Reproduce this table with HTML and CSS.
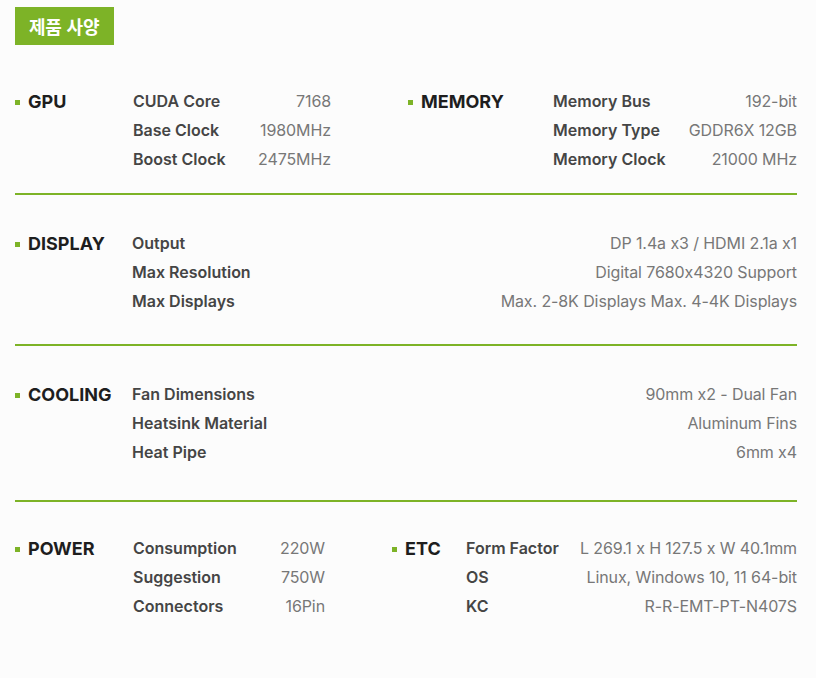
FILE: index.html
```html
<!DOCTYPE html>
<html lang="ko">
<head>
<meta charset="utf-8">
<title>제품 사양</title>
<link rel="stylesheet" href="styles.css">
</head>
<body>
<div class="page">
  <div class="badge">제품 사양</div>

  <section class="spec spec--first">
    <div class="group group--gpu">
      <h3 class="group-title">GPU</h3>
      <dl class="rows">
        <div class="row"><dt>CUDA Core</dt><dd>7168</dd></div>
        <div class="row"><dt>Base Clock</dt><dd>1980MHz</dd></div>
        <div class="row"><dt>Boost Clock</dt><dd>2475MHz</dd></div>
      </dl>
    </div>
    <div class="group group--memory">
      <h3 class="group-title">MEMORY</h3>
      <dl class="rows">
        <div class="row"><dt>Memory Bus</dt><dd>192-bit</dd></div>
        <div class="row"><dt>Memory Type</dt><dd>GDDR6X 12GB</dd></div>
        <div class="row"><dt>Memory Clock</dt><dd>21000 MHz</dd></div>
      </dl>
    </div>
  </section>

  <section class="spec spec--display">
    <div class="group group--wide">
      <h3 class="group-title">DISPLAY</h3>
      <dl class="rows">
        <div class="row"><dt>Output</dt><dd>DP 1.4a x3 / HDMI 2.1a x1</dd></div>
        <div class="row"><dt>Max Resolution</dt><dd>Digital 7680x4320 Support</dd></div>
        <div class="row"><dt>Max Displays</dt><dd>Max. 2-8K Displays Max. 4-4K Displays</dd></div>
      </dl>
    </div>
  </section>

  <section class="spec spec--cooling">
    <div class="group group--wide">
      <h3 class="group-title">COOLING</h3>
      <dl class="rows">
        <div class="row"><dt>Fan Dimensions</dt><dd>90mm x2 - Dual Fan</dd></div>
        <div class="row"><dt>Heatsink Material</dt><dd>Aluminum Fins</dd></div>
        <div class="row"><dt>Heat Pipe</dt><dd>6mm x4</dd></div>
      </dl>
    </div>
  </section>

  <section class="spec spec--last">
    <div class="group group--power">
      <h3 class="group-title">POWER</h3>
      <dl class="rows">
        <div class="row"><dt>Consumption</dt><dd>220W</dd></div>
        <div class="row"><dt>Suggestion</dt><dd>750W</dd></div>
        <div class="row"><dt>Connectors</dt><dd>16Pin</dd></div>
      </dl>
    </div>
    <div class="group group--etc">
      <h3 class="group-title">ETC</h3>
      <dl class="rows">
        <div class="row"><dt>Form Factor</dt><dd>L 269.1 x H 127.5 x W 40.1mm</dd></div>
        <div class="row"><dt>OS</dt><dd>Linux, Windows 10, 11 64-bit</dd></div>
        <div class="row"><dt>KC</dt><dd>R-R-EMT-PT-N407S</dd></div>
      </dl>
    </div>
  </section>
</div>
</body>
</html>
```

FILE: styles.css
```css
* { box-sizing: border-box; }

html, body {
  margin: 0;
  background: #fcfcfc;
}

body {
  font-family: Inter, "Noto Sans", "Noto Sans CJK KR", sans-serif;
  font-feature-settings: "calt" 0;
  color: #444;
}

.page {
  padding: 7px 19px 0 15px;
}

.badge {
  display: inline-block;
  height: 38px;
  line-height: 38px;
  padding: 0 15px 0 14px;
  background: #7db327;
  color: #fff;
  font-family: "Noto Sans CJK KR", sans-serif;
  font-weight: 700;
  font-size: 18px;
  letter-spacing: -0.2px;
}

.spec {
  display: flex;
  border-bottom: 2px solid #7db327;
}

.spec--first { padding: 42px 0 19px; }
.spec--display { padding: 34px 0 28px; }
.spec--cooling { padding: 34px 0 33px; }
.spec--last { padding: 32px 0 0; border-bottom: none; }

.group {
  display: flex;
  align-items: flex-start;
}

.group-title {
  position: relative;
  margin: 0;
  padding-left: 13px;
  font-size: 18px;
  line-height: 29px;
  font-weight: 700;
  color: #1e1e1e;
  letter-spacing: 0;
  flex: none;
}

.group-title::before {
  content: "";
  position: absolute;
  left: 0;
  top: 13px;
  width: 5px;
  height: 5px;
  background: #7db327;
}

.rows {
  margin: 0;
  flex: none;
}

.row {
  display: flex;
  justify-content: space-between;
  align-items: baseline;
  line-height: 29px;
  font-size: 16px;
}

.row dt {
  font-weight: 600;
  color: #454545;
  letter-spacing: 0;
}

.row dd {
  margin: 0;
  color: #777;
  letter-spacing: -0.1px;
}

.group--gpu .group-title { width: 118px; }
.group--gpu .rows { width: 198px; }
.group--memory { margin-left: 77px; }
.group--memory .group-title { width: 145px; }
.group--memory .rows { width: 244px; }

.group--wide { flex: 1; }
.group--wide .group-title { width: 117px; }
.group--wide .rows { flex: 1; }

.group--power .group-title { width: 118px; }
.group--power .rows { width: 192px; }
.group--etc { margin-left: 67px; }
.group--etc .group-title { width: 74px; }
.group--etc .rows { width: 331px; }
```
